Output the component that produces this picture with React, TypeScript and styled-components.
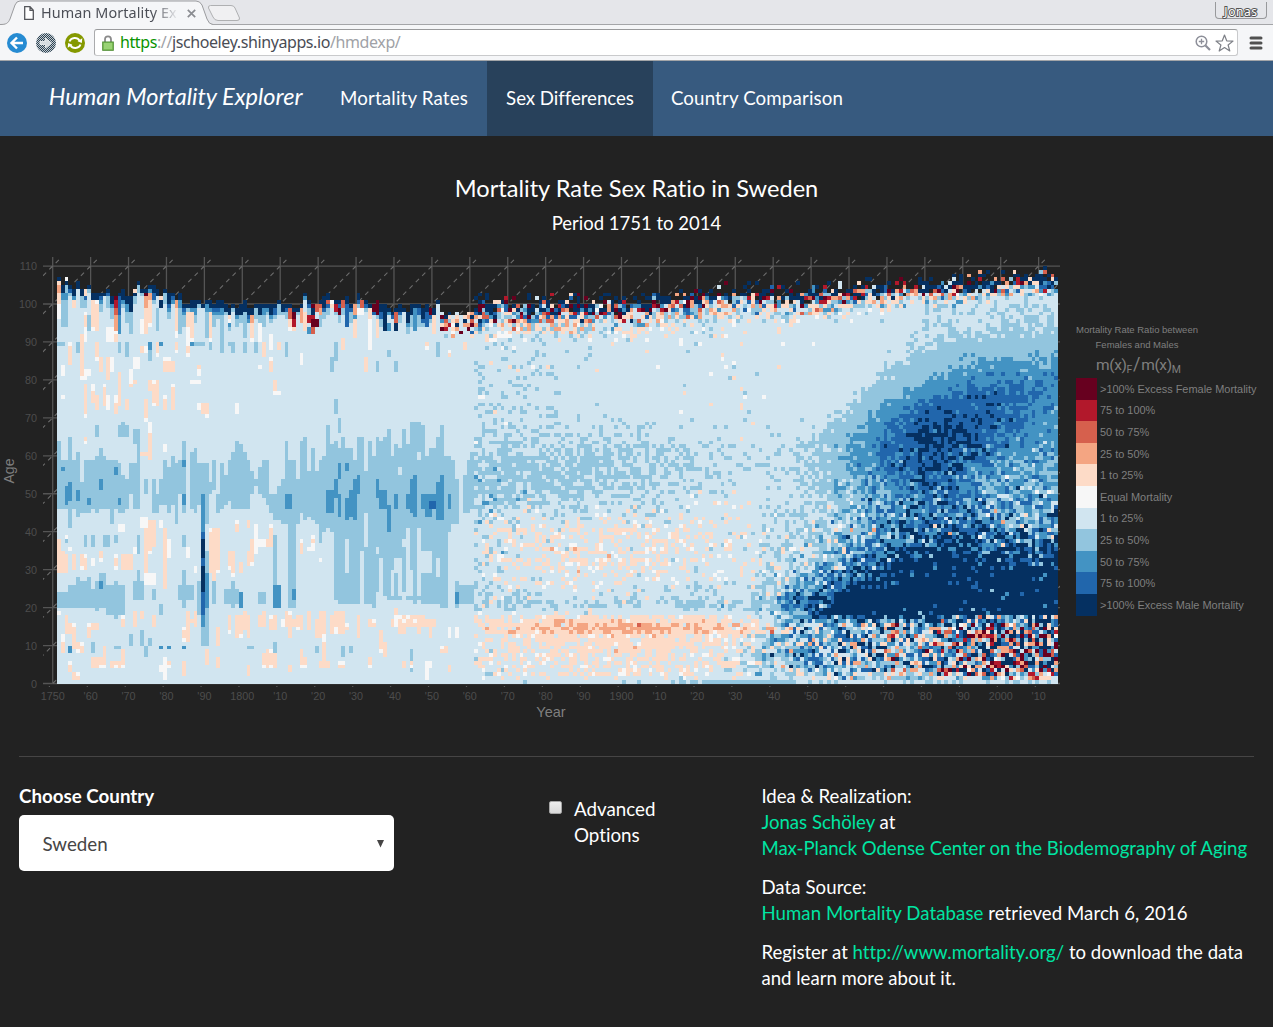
import React from "react";
import styled, { createGlobalStyle, css } from "styled-components";

const GlobalStyle = createGlobalStyle`
  *, *::before, *::after { box-sizing: border-box; }
  body {
    margin: 0;
    background: #222;
    color: #fff;
    font: 18.75px/26px Lato, sans-serif;
    font-variant-ligatures: none;
    overflow: hidden;
  }
`;

/* ---------- mortality surface ---------- */

const PALETTE = {
  a: "#67001f", b: "#b2182b", c: "#d6604d", d: "#f4a582", e: "#fddbc7", f: "#f7f7f7",
  g: "#d1e5f0", h: "#92c5de", i: "#4393c3", j: "#2166ac", k: "#053061",
} as const;
type Level = keyof typeof PALETTE;

const YEARS = 264;
const AGES = 112;
const CELL_W = 3.792;
const CELL_H = 3.795;
const X0 = 52.7;
const DATA_X = 57;
const Y0 = 443.5;

function randomSource(seed: number) {
  let s = seed;
  return () => {
    s = (s + 0x6d2b79f5) | 0;
    let t = Math.imul(s ^ (s >>> 15), 1 | s);
    t = (t + Math.imul(t ^ (t >>> 7), 61 | t)) ^ t;
    return ((t ^ (t >>> 14)) >>> 0) / 4294967296;
  };
}

function levelOf(r: number): Level {
  const m = Math.abs(r);
  if (m < 1) return "f";
  const step = m < 25 ? 0 : m < 50 ? 1 : m < 75 ? 2 : m < 100 ? 3 : 4;
  return (r > 0 ? "ghijk" : "edcba")[step] as Level;
}

const GRID_YEARS = [1861, 1880, 1900, 1920, 1930, 1940, 1950, 1960, 1970, 1980, 1990, 2000, 2014];
const MEAN: [number, number[]][] = [
  [0, [17, 18, 20, 26, 29, 28, 20, 21, 22, 23, 20, 20, 25]],
  [1, [9, 7, 6, 8, 12, 24, 24, 26, 25, 24, 12, 2, 12]],
  [3, [4, 0, -1, 2, 8, 26, 34, 36, 36, 32, 20, 10, 15]],
  [8, [9, 0, -3, -1, 10, 40, 60, 48, 44, 36, 22, 18, 25]],
  [12, [5, -8, -13, -10, 4, 28, 42, 42, 40, 32, 25, 25, 30]],
  [14, [-4, -23, -36, -28, -18, 14, 36, 44, 40, 36, 30, 30, 35]],
  [15, [-4, -20, -30, -24, -14, 14, 42, 50, 50, 44, 38, 40, 45]],
  [17, [4, -4, -6, -1, 3, 18, 80, 100, 110, 108, 95, 80, 85]],
  [18, [13, 10, 10, 13, 14, 22, 95, 150, 170, 160, 150, 140, 140]],
  [20, [22, 24, 20, 28, 26, 44, 96, 170, 190, 185, 180, 175, 170]],
  [23, [20, 15, 13, 20, 16, 34, 76, 140, 185, 180, 170, 170, 170]],
  [27, [15, 8, 6, 9, 7, 22, 50, 86, 135, 165, 150, 155, 160]],
  [31, [10, 5, 1, 6, 5, 18, 36, 68, 105, 148, 145, 138, 138]],
  [35, [10, 4, 1, 4, 7, 18, 28, 52, 80, 110, 110, 100, 98]],
  [40, [14, 6, 4, 4, 7, 18, 24, 40, 62, 88, 86, 72, 70]],
  [45, [22, 18, 16, 9, 9, 17, 23, 38, 56, 82, 66, 55, 56]],
  [50, [35, 31, 26, 18, 14, 17, 24, 40, 60, 84, 66, 50, 48]],
  [55, [33, 31, 28, 21, 19, 20, 28, 48, 70, 96, 77, 53, 49]],
  [60, [27, 27, 26, 21, 20, 20, 26, 56, 80, 106, 91, 64, 51]],
  [65, [22, 23, 21, 18, 17, 17, 21, 46, 82, 108, 97, 78, 58]],
  [70, [19, 19, 17, 14, 14, 14, 16, 31, 68, 97, 96, 86, 62]],
  [75, [18, 18, 14, 13, 13, 13, 14, 21, 44, 74, 86, 86, 66]],
  [80, [17, 17, 13, 12, 12, 12, 14, 17, 28, 48, 66, 72, 61]],
  [85, [16, 16, 12, 11, 11, 12, 13, 15, 21, 33, 46, 51, 50]],
  [90, [14, 13, 11, 9, 9, 11, 12, 13, 16, 24, 29, 32, 35]],
  [95, [11, 10, 10, 9, 9, 9, 10, 12, 13, 18, 21, 23, 25]],
  [101, [6, 6, 6, 6, 6, 8, 10, 10, 12, 14, 16, 18, 18]],
  [112, [6, 6, 6, 6, 6, 8, 10, 10, 12, 14, 16, 18, 18]],
];
const SPREAD: [number, number[]][] = [
  [0, [3, 3, 3, 1, 1, 1, 7, 6, 6, 6, 8, 9, 3]],
  [1, [9, 7, 7, 9, 10, 14, 18, 22, 24, 26, 38, 48, 45]],
  [3, [11, 9, 8, 10, 13, 24, 36, 40, 48, 62, 85, 110, 130]],
  [12, [12, 10, 8, 10, 13, 30, 44, 48, 52, 65, 90, 120, 135]],
  [15, [13, 10, 9, 10, 12, 18, 38, 48, 52, 55, 75, 95, 105]],
  [18, [8, 7, 7, 7, 7, 13, 26, 36, 40, 45, 52, 55, 55]],
  [23, [14, 9, 9, 9, 7, 18, 28, 38, 42, 42, 46, 46, 46]],
  [35, [15, 12, 11, 11, 11, 12, 18, 28, 32, 36, 40, 42, 40]],
  [50, [14, 9, 8, 8, 7, 7, 7, 15, 18, 22, 23, 25, 21]],
  [60, [9, 7, 6, 5, 6, 6, 6, 9, 12, 15, 17, 16, 15]],
  [68, [8, 7, 4, 5, 6, 6, 3, 5, 7, 12, 11, 9, 11]],
  [78, [9, 7, 4, 6, 7, 6, 3, 3, 3, 5, 8, 9, 9]],
  [86, [10, 8, 5, 5, 6, 6, 5, 3, 3, 3, 4, 4, 5]],
  [92, [13, 11, 9, 8, 7, 6, 6, 5, 5, 5, 5, 5, 4]],
  [112, [18, 18, 18, 18, 18, 16, 14, 13, 12, 12, 12, 12, 11]],
];

function sample(table: [number, number[]][], year: number, age: number) {
  let r = 0;
  while (r < table.length - 2 && table[r + 1][0] <= age) r++;
  let c = 0;
  while (c < GRID_YEARS.length - 2 && GRID_YEARS[c + 1] <= year) c++;
  const [a0, lo] = table[r];
  const [a1, hi] = table[r + 1];
  const u = Math.min(1, (year - GRID_YEARS[c]) / (GRID_YEARS[c + 1] - GRID_YEARS[c]));
  const v = Math.min(1, (age - a0) / (a1 - a0));
  const low = lo[c] + (lo[c + 1] - lo[c]) * u;
  const high = hi[c] + (hi[c + 1] - hi[c]) * u;
  return low + (high - low) * v;
}

/* Highest age observed in each of the first 110 years. */
const EARLY_TOP = [
  107, 105, 107, 105, 104, 106, 104, 104, 105, 103, 103, 103, 103, 104, 102, 102, 103, 104, 102, 102,
  104, 106, 104, 104, 105, 105, 104, 102, 104, 103, 103, 101, 103, 100, 100, 101, 101, 101, 100, 101,
  101, 100, 101, 101, 100, 99, 100, 99, 100, 101, 99, 99, 100, 100, 100, 100, 100, 100, 101, 100,
  100, 100, 99, 99, 100, 103, 101, 100, 100, 101, 102, 103, 101, 101, 101, 100, 102, 100, 100, 103,
  101, 101, 100, 100, 101, 100, 100, 99, 98, 99, 100, 99, 98, 100, 100, 100, 99, 100, 99, 99,
  101, 98, 97, 98, 97, 98, 97, 97, 98, 98,
];
/* Upper and lower edge of the mid-life band. */
const BAND_TOP = [
  64, 59, 59, 65, 59, 61, 53, 59, 59, 59, 60, 62, 60, 59, 59, 59, 58, 55, 54, 58,
  58, 67, 50, 54, 50, 54, 50, 54, 59, 57, 60, 58, 59, 64, 50, 61, 62, 58, 58, 58,
  53, 59, 50, 58, 55, 59, 61, 64, 63, 61, 59, 56, 54, 57, 59, 59, 50, 50, 52, 54,
  64, 59, 59, 54, 64, 65, 56, 62, 56, 59, 60, 68, 63, 64, 62, 65, 62, 62, 59, 65,
  65, 56, 64, 60, 65, 64, 65, 67, 60, 63, 62, 67, 63, 69, 69, 69, 68, 60, 62, 62,
  65, 68, 60, 60, 59, 54, 42, 55, 59, 61,
];
const BAND_BASE = [
  46, 46, 46, 41, 46, 44, 45, 45, 45, 46, 45, 46, 46, 46, 42, 46, 45, 45, 46, 50,
  46, 46, 50, 50, 50, 45, 45, 47, 47, 45, 47, 42, 50, 45, 50, 46, 45, 47, 41, 42,
  50, 51, 45, 46, 47, 48, 46, 46, 46, 46, 46, 50, 52, 50, 49, 47, 45, 43, 43, 42,
  42, 20, 20, 42, 45, 43, 44, 43, 42, 37, 40, 41, 40, 22, 21, 21, 21, 21, 21, 21,
  35, 21, 21, 20, 23, 22, 23, 22, 22, 22, 22, 24, 22, 22, 21, 22, 21, 21, 21, 21,
  21, 20, 20, 40, 42, 42, 42, 45, 45, 46,
];
/* column, width, lowest age, age above the highest, level */
const PATCHES = `
0 1 23 24 h,0 1 20 23 h,1 1 20 24 h,2 1 20 24 h,3 2 20 26 h,5 1 20 28 h,6 2 20 27 h,8 1 20 28 h,9 1 20 25 h,10 1 19 27 h,11 2 20 29 h,13 2 18 26 h,15 1 17 27 h,16 2 18 26 h,
11 1 25 27 i,20 3 22 27 h,21 1 22 30 h,25 1 22 25 h,27 1 18 21 h,32 4 22 26 h,33 1 20 30 h,37 1 18 27 h,39 1 20 35 h,39 1 20 29 i,38 2 10 20 h,41 1 21 27 h,44 4 21 25 h,46 1 20 27 h,48 1 20 24 i,53 2 21 24 h,57 2 20 26 i,57 1 26 39 h,62 1 26 46 h,
2 1 47 52 i,3 1 48 53 i,1 1 56 57 i,5 1 48 51 i,8 1 47 49 i,11 1 51 54 i,15 1 55 57 i,16 1 47 49 i,33 1 47 50 i,33 1 57 59 i,
38 1 43 50 i,38 1 40 43 i,38 1 38 40 j,38 1 33 38 k,38 1 31 33 j,38 1 24 31 k,38 1 18 24 j,38 1 15 18 i,
60 2 46 50 i,71 2 45 51 i,73 1 49 54 i,74 1 44 50 i,74 1 54 58 i,76 1 43 49 i,76 1 56 58 i,77 1 44 51 i,78 1 43 54 i,79 1 50 55 i,84 1 49 54 i,85 2 46 51 i,87 1 40 47 i,89 1 46 50 i,92 3 46 50 i,93 1 45 54 i,94 1 44 55 i,96 4 46 50 i,97 2 44 50 i,98 2 46 48 j,100 2 43 53 i,101 1 43 55 i,103 1 46 50 i,105 1 20 27 h,105 1 21 24 i,62 1 22 25 i,106 4 21 26 h,
76 1 29 38 g,80 1 21 35 g,81 1 36 45 g,84 1 22 24 g,85 1 22 33 g,84 1 34 36 g,88 1 23 30 g,90 1 23 33 g,89 1 29 33 g,91 2 36 38 g,92 1 23 41 g,93 1 23 30 g,95 1 23 41 g,96 3 29 35 g,98 1 30 34 g,100 1 28 33 g,90 1 55 57 g,95 1 59 61 g,
0 1 29 38 e,1 1 29 35 e,2 1 29 34 e,4 1 30 34 e,6 2 30 34 e,11 1 32 35 e,15 1 30 34 e,17 3 30 34 e,20 1 34 36 f,23 3 36 43 e,23 1 28 41 e,24 1 34 40 e,23 3 26 29 f,28 1 25 41 e,29 1 33 38 f,34 1 33 36 f,40 3 29 41 e,41 1 27 41 e,45 2 30 35 e,46 1 28 33 e,48 1 29 32 e,50 2 31 35 e,51 1 33 38 e,55 1 36 38 e,56 1 36 42 e,52 1 34 42 f,53 2 36 38 f,47 1 40 43 e,50 1 41 43 e,
2 1 38 39 f,3 1 35 36 f,9 1 31 33 f,16 2 40 42 f,22 2 41 44 f,27 1 41 43 f,36 1 29 31 f,64 1 34 38 e,67 1 36 39 e,66 2 35 36 f,69 1 32 33 f,
7 1 36 39 h,2 1 37 38 h,9 1 36 39 h,12 2 36 39 h,15 1 37 39 h,21 1 34 39 h,33 1 36 39 h,
1 1 8 13 e,1 1 11 13 f,2 3 13 16 e,2 1 16 18 e,5 2 8 11 e,3 1 8 10 i,4 1 9 14 e,8 3 14 16 e,8 1 12 16 e,9 4 4 7 e,12 1 6 10 e,14 4 4 6 e,17 1 5 9 e,17 1 15 18 e,20 1 15 19 e,22 1 17 19 e,25 1 15 18 e,33 2 11 15 e,34 1 12 19 e,36 1 15 19 e,35 1 16 17 e,42 1 10 15 e,45 1 13 18 e,47 2 12 18 e,49 1 14 19 e,50 1 12 18 e,53 2 15 18 e,54 1 15 19 e,56 1 14 18 e,54 3 4 8 e,55 2 7 9 e,3 1 3 6 e,4 2 1 3 e,27 2 3 5 f,28 1 1 7 f,29 1 4 6 e,33 1 2 6 e,39 1 5 9 e,42 1 4 7 e,50 1 2 5 e,0 1 18 19 f,
19 1 10 13 h,22 1 10 14 h,23 1 7 10 h,24 1 10 12 h,27 1 9 10 i,29 1 9 10 i,33 1 9 10 i,9 1 8 11 h,15 2 9 10 h,50 2 9 10 h,57 1 8 11 h,68 1 8 10 h,75 1 7 10 h,77 1 8 10 h,93 1 3 9 h,
57 1 14 18 e,59 5 15 17 e,60 2 16 19 e,61 1 12 15 e,63 2 14 18 e,66 1 14 19 e,68 3 12 17 e,69 2 15 19 e,70 1 4 12 e,72 4 13 18 e,73 3 14 19 e,76 1 14 16 e,79 1 12 18 e,82 2 15 17 e,88 12 15 17 e,89 8 16 18 e,90 2 13 17 e,89 1 17 20 e,95 1 13 16 e,98 1 12 16 e,85 1 8 14 e,86 1 7 11 e,64 1 4 9 e,65 1 4 7 e,69 3 4 6 e,74 2 4 6 e,82 1 4 7 e,57 1 4 8 e,61 1 3 5 e,91 1 4 6 e,93 1 4 6 e,97 2 4 6 f,97 1 1 4 f,101 2 8 10 e,103 1 12 15 f,105 1 12 15 f,103 1 3 5 e,
3 1 84 90 e,5 1 87 90 h,6 1 81 92 e,6 2 80 81 f,7 1 70 79 e,7 2 81 83 f,9 1 74 77 e,9 1 77 79 f,10 1 72 76 e,10 1 85 90 e,11 1 82 86 e,12 1 73 79 e,13 1 80 86 e,13 1 72 76 f,14 1 82 86 f,15 1 71 75 e,15 1 74 76 f,16 1 73 82 e,18 1 72 75 e,19 1 80 83 f,19 2 79 80 e,19 1 78 80 e,20 2 83 86 f,22 2 87 89 e,23 1 69 75 e,24 3 77 80 e,25 2 73 80 e,24 1 59 66 e,24 1 66 69 f,22 2 60 61 e,28 2 84 86 f,28 3 82 85 e,28 1 72 76 e,30 1 72 79 e,28 1 61 63 f,1 1 81 84 f,1 1 75 76 f,7 1 63 65 e,
16 3 65 68 h,17 1 65 69 h,20 2 63 67 h,10 1 65 68 h,37 1 82 84 e,37 1 81 82 f,38 2 71 74 e,39 1 70 71 f,47 1 71 74 f,37 1 72 74 f,35 3 79 80 f,53 1 83 84 f,56 1 82 86 e,57 1 76 80 e,58 1 76 77 f,
0 2 89 90 h,16 1 87 90 h,18 1 86 90 h,24 1 85 90 h,24 1 88 90 i,26 1 86 90 e,27 1 89 90 i,31 1 87 90 e,34 1 86 90 e,35 1 89 90 i,36 3 89 90 h,40 1 88 90 h,43 1 87 91 h,45 2 89 90 h,46 1 87 90 h,49 1 87 90 h,52 1 87 90 h,54 1 86 90 e,56 1 88 92 f,58 1 88 90 e,60 1 86 90 h,64 1 84 87 f,72 1 82 86 h,73 1 85 90 h,75 1 88 91 e,81 1 82 86 e,84 1 82 85 h,89 1 82 85 h,82 1 88 92 f,87 1 86 88 h,73 1 71 75 h,74 1 66 70 h,97 1 88 90 e,100 1 86 90 h,103 1 86 88 e,107 1 88 90 e,
0 1 103 105 d,0 1 99 103 e,0 1 96 99 f,0 1 105 106 e,1 2 94 101 h,1 2 101 103 i,2 1 106 107 f,4 1 99 101 e,7 1 102 104 e,7 1 93 98 e,7 1 90 93 f,8 1 93 97 h,9 2 93 101 e,13 2 90 94 f,15 1 101 102 a,15 1 99 101 b,15 1 97 99 c,15 1 93 97 d,15 1 90 93 e,16 1 97 102 j,16 1 92 97 i,19 1 98 102 k,19 1 92 97 h,20 1 103 104 e,22 1 92 96 f,23 1 102 103 a,23 1 99 102 d,23 1 92 99 e,24 1 101 103 d,24 1 94 101 e,26 1 93 99 h,27 1 101 102 e,31 1 99 101 d,31 1 93 99 e,31 1 91 93 f,32 1 92 97 h,34 2 94 98 e,34 1 90 94 f,35 1 90 94 e,40 1 90 98 e,39 1 91 97 h,43 1 90 97 h,45 1 95 97 e,51 1 95 97 d,51 1 90 95 e,53 1 90 95 f,49 1 91 98 h,
61 2 93 97 e,61 1 96 99 c,62 1 96 98 a,62 1 94 96 b,64 1 95 99 d,65 1 93 98 e,66 2 95 97 b,67 2 94 96 a,67 1 92 94 c,67 1 99 100 a,68 2 98 100 c,66 1 92 94 i,69 1 97 99 d,71 1 100 101 c,72 1 99 101 e,74 1 97 99 a,73 1 98 100 b,75 1 99 101 c,76 1 94 100 j,78 1 97 100 d,78 1 91 96 e,79 2 97 99 f,80 1 99 101 c,82 1 95 99 e,82 1 91 95 f,84 1 97 101 a,84 1 91 96 e,83 1 98 100 a,86 1 93 98 k,87 1 93 95 i,89 1 95 98 c,89 1 93 95 k,91 1 94 98 g,94 1 93 99 i,97 1 94 98 j,98 1 97 99 a,99 1 92 97 e`;

function buildSurface(): (Level | null)[][] {
  const rand = randomSource(1751);
  const gauss = () => Math.sqrt(-2 * Math.log(rand() + 1e-9)) * Math.cos(2 * Math.PI * rand());
  const surface: (Level | null)[][] = [];
  for (let c = 0; c < YEARS; c++) {
    const column: (Level | null)[] = new Array(AGES).fill(null);
    surface.push(column);
    if (c < 110) {
      const top = EARLY_TOP[c];
      for (let a = 0; a < top; a++) column[a] = "g";
      for (let a = BAND_BASE[c]; a < BAND_TOP[c]; a++) column[a] = "h";
      if (c >= 101) {
        /* The last columns of the old series end in a short mixed fringe. */
        for (let a = 91; a < top; a++) {
          const t = rand();
          if (a > 96 && t < 0.25) column[a] = null;
          else if (t < (a > 93 ? 0.85 : 0.4)) column[a] = "kkkjabcdddeefhi"[Math.floor(rand() * 15)] as Level;
        }
        continue;
      }
      const dark = 1 + Math.floor(rand() * 2.4);
      const blue = Math.floor(rand() * 3);
      const pale = Math.floor(rand() * 4);
      for (let a = 1; a <= dark + blue + pale; a++) {
        column[top - a] = a <= dark ? "k" : a <= dark + blue ? (rand() < 0.5 ? "j" : "i") : "h";
      }
      continue;
    }
    const year = 1751 + c;
    const edge = year < 1900 ? 98.8 : year < 1930 ? 98.8 + (year - 1900) * 0.1 : year < 1950 ? 101.8 : 101.8 + (year - 1950) * 0.065;
    for (let a = 0; a < AGES; a++) {
      const over = a - edge;
      if (over > -2 && over <= 0 && rand() < 0.1) continue;
      if (over > 0 && rand() < 0.26 + over * 0.2) continue;
      if (over > 3.5 && rand() < 0.6) continue;
      const depth = year < 1905 ? 9 : year < 1960 ? 8 : 6;
      const wild = Math.max(0, Math.min(1, 1 + over / depth));
      if (over > -1 && rand() < (over > 1 ? 0.55 : 0.32)) {
        column[a] = "k";
      } else {
        const sd = sample(SPREAD, year, a);
        column[a] = levelOf(sample(MEAN, year, a) + gauss() * (sd + Math.pow(wild, 1.8) * 100));
      }
    }
  }
  for (const entry of PATCHES.trim().split(",")) {
    const [c, w, lo, hi, level] = entry.trim().split(" ");
    for (let x = +c; x < +c + +w; x++) {
      for (let a = +lo; a < +hi; a++) {
        const ragged = level === "e" && (a === +lo || a === +hi - 1) && rand() < 0.25;
        surface[x][a] = ragged ? "f" : (level as Level);
      }
    }
  }
  return surface;
}

function surfacePaths() {
  const surface = buildSurface();
  const paths: Record<string, string> = {};
  surface.forEach((column, c) => {
    const x = Math.round(DATA_X + c * CELL_W);
    const w = Math.round(DATA_X + (c + 1) * CELL_W) - x;
    let a = 0;
    while (a < AGES) {
      const level = column[a];
      let end = a + 1;
      while (end < AGES && column[end] === level) end++;
      if (level) {
        const y = Math.round(Y0 - end * CELL_H);
        const h = Math.round(Y0 - a * CELL_H) - y;
        paths[level] = (paths[level] || "") + `M${x} ${y}h${w}v${h}h${-w}z`;
      }
      a = end;
    }
  });
  return paths;
}

const SURFACE = surfacePaths();

const Figure = styled.div`
  display: flex;
  height: 488px;
  font-family: "Liberation Sans", Arial, sans-serif;
`;
const Plot = styled.svg`
  display: block;
  flex: none;
  width: 1066px;
  height: 488px;
  .tick { fill: #4d4d4d; font-size: 10.8px; }
  .axis { fill: #7f7f7f; font-size: 14.5px; }
`;

function SurfacePlot() {
  const decades = Array.from({ length: 27 }, (_, n) => n);
  const ages = Array.from({ length: 12 }, (_, n) => n);
  const px = (n: number) => X0 + n * 37.92;
  const py = (n: number) => Y0 - n * 37.95;
  return (
    <Plot viewBox="0 0 1066 488">
      <clipPath id="panel"><rect x="43" y="17" width="1017" height="430" /></clipPath>
      <g clipPath="url(#panel)" stroke="#555" fill="none">
        {decades.map((n) => <path key={n} d={`M${px(n)} 17V444`} strokeWidth="1.3" />)}
        {ages.map((n) => <path key={n} d={`M43 ${py(n)}H1060`} strokeWidth="1.3" />)}
        {Array.from({ length: 39 }, (_, n) => n - 12).map((n) => (
          <path key={n} d={`M${px(n) - 37.92} ${Y0 + 37.95}L${px(n + 13)} ${py(13)}`} stroke="#6c6c6c" strokeDasharray="4.5 4.5" strokeWidth="1.1" />
        ))}
      </g>
      <g shapeRendering="crispEdges">
        {Object.entries(SURFACE).map(([level, d]) => (
          <path key={level} d={d} fill={PALETTE[level as Level]} />
        ))}
      </g>
      {ages.map((n) => (
        <text key={n} className="tick" x="37" y={py(n) + 4} textAnchor="end">{n * 10}</text>
      ))}
      {decades.map((n) => {
        const year = 1750 + n * 10;
        const full = n === 0 || year % 100 === 0;
        return (
          <text key={n} className="tick" x={px(n)} y="460" textAnchor="middle">
            {full ? year : `'${String(year % 100).padStart(2, "0")}`}
          </text>
        );
      })}
      <text className="axis" x="551" y="477" textAnchor="middle">Year</text>
      <text className="axis" transform="translate(14 231) rotate(-90)" textAnchor="middle" textLength="25" lengthAdjust="spacingAndGlyphs">Age</text>
    </Plot>
  );
}

const Legend = styled.div`
  display: flex;
  flex-direction: column;
  padding: 82px 0 0 10px;
  color: #7f7f7f;
  white-space: nowrap;
`;
const LegendCaption = styled.div`
  width: 122px;
  font-size: 9.5px;
  line-height: 15px;
  text-align: center;
`;
const LegendFormula = styled.div`
  height: 26px;
  padding: 2px 0 0 20px;
  font: 15.5px/22px Roboto, sans-serif;
  letter-spacing: -0.35px;
  sub { font-size: 10.5px; line-height: 0; vertical-align: -3px; }
`;
const Slash = styled.span`
  margin: 0 1px;
  font-size: 18px;
  line-height: 0;
`;
const LegendRow = styled.div`
  display: flex;
  align-items: center;
  gap: 3px;
  height: 21.6px;
  padding-bottom: 0;
  font-size: 10.95px;
  line-height: 20px;
`;
const Swatch = styled.span<{ $color: string }>`
  width: 21px;
  height: 100%;
  background: ${(p) => p.$color};
`;

const LEGEND: [Level, string][] = [
  ["a", ">100% Excess Female Mortality"], ["b", "75 to 100%"], ["c", "50 to 75%"], ["d", "25 to 50%"],
  ["e", "1 to 25%"], ["f", "Equal Mortality"], ["g", "1 to 25%"], ["h", "25 to 50%"], ["i", "50 to 75%"],
  ["j", "75 to 100%"], ["k", ">100% Excess Male Mortality"],
];

/* ---------- browser window ---------- */

const TabStrip = styled.div`
  display: flex;
  justify-content: space-between;
  height: 25px;
  background: #e5e6ea;
  box-shadow: inset 0 -1px #a4a5a8;
`;
const TabGroup = styled.div`
  position: relative;
  width: 250px;
  height: 25px;
`;
const TabShape = styled.svg`
  position: absolute;
  inset: 0;
`;
const TabContent = styled.div`
  position: relative;
  display: flex;
  align-items: center;
  height: 25px;
  padding: 1px 0 0 24px;
`;
const TabTitle = styled.span`
  width: 139px;
  margin-left: 7px;
  white-space: nowrap;
  font: 14.4px/20px "Noto Sans", sans-serif;
  letter-spacing: 0.1px;
  color: #4c4f57;
  mask-image: linear-gradient(90deg, #000 112px, transparent 138px);
`;
const CloseIcon = styled.svg`
  margin-left: 7px;
`;
const Profile = styled.div`
  width: 52px;
  height: 17px;
  margin: 2px 6px 0 0;
  border: 1px solid #98999c;
  border-top: 0;
  border-radius: 0 0 4px 4px;
  text-align: center;
  font: 12px/19px "Noto Sans", sans-serif;
  letter-spacing: 0.6px;
  color: #fff;
  -webkit-text-stroke: 2px #555;
  paint-order: stroke fill;
`;
const Toolbar = styled.div`
  display: flex;
  align-items: center;
  height: 36px;
  padding: 0 10px 0 7px;
  background: #f5f6f8;
  border-bottom: 1px solid #a3a5a8;
`;
const ToolButtons = styled.div`
  display: flex;
  gap: 9px;
  width: 87px;
`;
const AddressBar = styled.div`
  display: flex;
  align-items: center;
  flex: 1;
  height: 27px;
  padding: 0 3px 0 7px;
  border: 1px solid #c9cacc;
  border-top-color: #999a9c;
  border-left-color: #aaabad;
  border-radius: 3px;
  background: #fff;
`;
const Url = styled.span`
  flex: 1;
  margin: -2px 0 0 6px;
  font: 16px/22px "Noto Sans", sans-serif;
  letter-spacing: -0.4px;
  color: #4a4d55;
  white-space: nowrap;
`;
const UrlPart = styled.span<{ $tone: "secure" | "muted" }>`
  color: ${(p) => (p.$tone === "secure" ? "#0a9300" : "#a0a2a7")};
`;
const StarIcon = styled.svg`
  margin-left: 4px;
`;
const MenuIcon = styled.svg`
  margin-left: 11px;
`;

/* ---------- page ---------- */

const Navbar = styled.nav`
  display: flex;
  height: 75px;
  padding-left: 30px;
  background: #375a7f;
`;
const Brand = styled.div`
  width: 291px;
  padding-left: 18.75px;
  font-size: 23.55px;
  font-style: italic;
  line-height: 71px;
  white-space: nowrap;
`;
const NavItem = styled.a<{ $active?: boolean; $width: number; $tracking?: number }>`
  width: ${(p) => p.$width}px;
  text-align: center;
  font-size: 18.7px;
  line-height: 74px;
  letter-spacing: ${(p) => p.$tracking ?? 0}px;
  white-space: nowrap;
  ${(p) => p.$active && css`background: #28415b;`}
`;
const Heading = styled.header`
  height: 104px;
  padding-top: 36px;
  text-align: center;
`;
const Title = styled.h1`
  margin: 0;
  font-size: 23.6px;
  font-weight: 400;
  line-height: 32px;
`;
const Subtitle = styled.div`
  margin-top: 6px;
  font-size: 18.5px;
`;
const Controls = styled.section`
  display: grid;
  grid-template-columns: 530px 212.4px 1fr;
  margin: 28px 19px 0;
  padding-top: 26px;
  border-top: 1px solid #464545;
`;
const Label = styled.label`
  display: block;
  font-weight: 700;
`;
const Select = styled.div`
  display: flex;
  align-items: center;
  justify-content: space-between;
  width: 375px;
  height: 56px;
  margin-top: 6px;
  padding: 2px 9px 0 23.5px;
  border-radius: 5px;
  background: #fff;
  color: #464545;
`;
const CheckRow = styled.label`
  display: flex;
  align-items: flex-start;
  gap: 12px;
  width: 135px;
  padding-top: 13px;
`;
const CheckBox = styled.span`
  flex: none;
  width: 13px;
  height: 13px;
  margin-top: 5px;
  border: 1px solid #a5a5a5;
  border-radius: 2px;
  background: linear-gradient(#eee, #d9d9d9);
`;
const Credits = styled.div`
  font-size: 18.6px;
`;
const CreditBlock = styled.p<{ $tracking?: number }>`
  margin: 0 0 13px;
  letter-spacing: ${(p) => p.$tracking ?? 0}px;
`;
const Link = styled.a`
  color: #00e5a2;
  white-space: nowrap;
`;

export default function App() {
  return (
    <>
      <GlobalStyle />
      <TabStrip>
        <TabGroup>
          <TabShape width="250" height="25" fill="none">
            <path d="M0 25V24.500C6 24.500 8 23.500 10 19L15 5Q16.500 1 20 1H196Q200 1 202 5L207 19Q209 24.500 213 24.500V25Z" fill="#f5f6f8" />
            <path d="M0 24.500C6 24.500 8 23.500 10 19L15 5Q16.500 1 20 1H196Q200 1 202 5L207 19Q209 24.500 213 24.500" stroke="#9b9c9f" />
            <path d="M210.500 5.500H231Q234 5.500 235 8L239.500 18Q240 20.500 237 20.500H218Q214.500 20.500 213 17L208.500 8Q208 5.500 210.500 5.500Z" fill="#f0f0f2" stroke="#afb0b2" />
          </TabShape>
          <TabContent>
            <svg width="10" height="14" fill="#fff" stroke="#54565b" strokeWidth="1.300">
              <path d="M.7.7H6L9.300 4.200V13.300H.7ZM6 .7V4.300H9.300" />
            </svg>
            <TabTitle>Human Mortality Ex</TabTitle>
            <CloseIcon width="9" height="9" stroke="#8a8c91" strokeWidth="1.700">
              <path d="M.8.8L8.200 8.200M8.200.8L.8 8.200" />
            </CloseIcon>
          </TabContent>
        </TabGroup>
        <Profile>Jonas</Profile>
      </TabStrip>
      <Toolbar>
        <ToolButtons>
          <svg width="20" height="20">
            <circle cx="10" cy="10" r="10" fill="#268bd2" />
            <path d="M16 10H5M10 4.500L4.500 10L10 15.500" fill="none" stroke="#fff" strokeWidth="2.400" />
          </svg>
          <svg width="20" height="20">
            <defs>
              <pattern id="dither" width="2" height="2" patternUnits="userSpaceOnUse">
                <path d="M0 0h1v1h-1zM1 1h1v1h-1z" fill="#2d4353" />
                <path d="M1 0h1v1h-1zM0 1h1v1h-1z" fill="#c3cbd1" />
              </pattern>
            </defs>
            <circle cx="10" cy="10" r="10" fill="url(#dither)" />
            <path d="M4 8.500H9.500V5L15.500 10L9.500 15V11.500H4Z" fill="#d6dce0" stroke="#f1f3f4" strokeWidth=".8" />
          </svg>
          <svg width="20" height="20">
            <circle cx="10" cy="10" r="10" fill="#859900" />
            <path d="M4.500 8.500C6 4.200 12.500 3.800 14.500 7.700M15.500 11.500C14 15.800 7.500 16.200 5.500 12.300" fill="none" stroke="#fff" strokeWidth="1.900" />
            <path d="M17.300 5.200L16.800 10L12.600 8.200ZM2.700 14.800L3.200 10L7.400 11.800Z" fill="#fff" />
          </svg>
        </ToolButtons>
        <AddressBar>
          <svg width="12" height="16">
            <path d="M3 8V4.500Q3 1.300 6 1.300T9 4.500V8" fill="none" stroke="#8a8a8a" strokeWidth="1.800" />
            <rect x=".7" y="7" width="10.600" height="8.300" fill="#83c65b" stroke="#4f8d35" />
            <path d="M2 9H10M2 11H10M2 13H10" stroke="#b0df90" />
          </svg>
          <Url>
            <UrlPart $tone="secure">https</UrlPart><UrlPart $tone="muted">://</UrlPart>
            jschoeley.shinyapps.io<UrlPart $tone="muted">/hmdexp/</UrlPart>
          </Url>
          <svg width="16" height="16" fill="none" stroke="#8d8f99">
            <circle cx="6.500" cy="6.500" r="5.300" strokeWidth="1.500" />
            <path d="M3.800 6.500H9.200M6.500 3.800V9.200" strokeWidth="1.300" />
            <path d="M10.500 10.500L15 15" strokeWidth="2.200" />
          </svg>
          <StarIcon width="19" height="18" fill="#fff" stroke="#7e8087" strokeWidth="1.200" strokeLinejoin="round">
            <path d="M9.500 1L11.700 6.800L18 7.100L13.100 11L14.800 17L9.500 13.600L4.200 17L5.900 11L1 7.100L7.300 6.800Z" />
          </StarIcon>
        </AddressBar>
        <MenuIcon width="14" height="14" stroke="#505050" strokeWidth="3" strokeLinecap="round">
          <path d="M2 2H12M2 7H12M2 12H12" />
        </MenuIcon>
      </Toolbar>

      <Navbar>
        <Brand>Human Mortality Explorer</Brand>
        <NavItem $width={166} $tracking={0.18}>Mortality Rates</NavItem>
        <NavItem $width={166} $tracking={-0.05} $active>Sex Differences</NavItem>
        <NavItem $width={208} $tracking={0.15}>Country Comparison</NavItem>
      </Navbar>

      <Heading>
        <Title>Mortality Rate Sex Ratio in Sweden</Title>
        <Subtitle>Period 1751 to 2014</Subtitle>
      </Heading>

      <Figure>
        <SurfacePlot />
        <Legend>
          <LegendCaption>Mortality Rate Ratio between<br />Females and Males</LegendCaption>
          <LegendFormula>m(x)<sub>F</sub><Slash>/</Slash>m(x)<sub>M</sub></LegendFormula>
          {LEGEND.map(([level, text]) => (
            <LegendRow key={level}>
              <Swatch $color={PALETTE[level]} />
              {text}
            </LegendRow>
          ))}
        </Legend>
      </Figure>

      <Controls>
        <div>
          <Label>Choose Country</Label>
          <Select>
            Sweden
            <svg width="9" height="8"><path d="M1 0H8L4.500 7.500Z" fill="#464545" /></svg>
          </Select>
        </div>
        <CheckRow>
          <CheckBox />
          <span>Advanced Options</span>
        </CheckRow>
        <Credits>
          <CreditBlock>
            Idea &amp; Realization:<br />
            <Link>Jonas Schöley</Link> at<br />
            <Link>Max-Planck Odense Center on the Biodemography of Aging</Link>
          </CreditBlock>
          <CreditBlock $tracking={0.08}>
            Data Source:<br />
            <Link>Human Mortality Database</Link> retrieved March 6, 2016
          </CreditBlock>
          <CreditBlock>
            Register at <Link>http://www.mortality.org/</Link> to download the data<br />
            and learn more about it.
          </CreditBlock>
        </Credits>
      </Controls>
    </>
  );
}
